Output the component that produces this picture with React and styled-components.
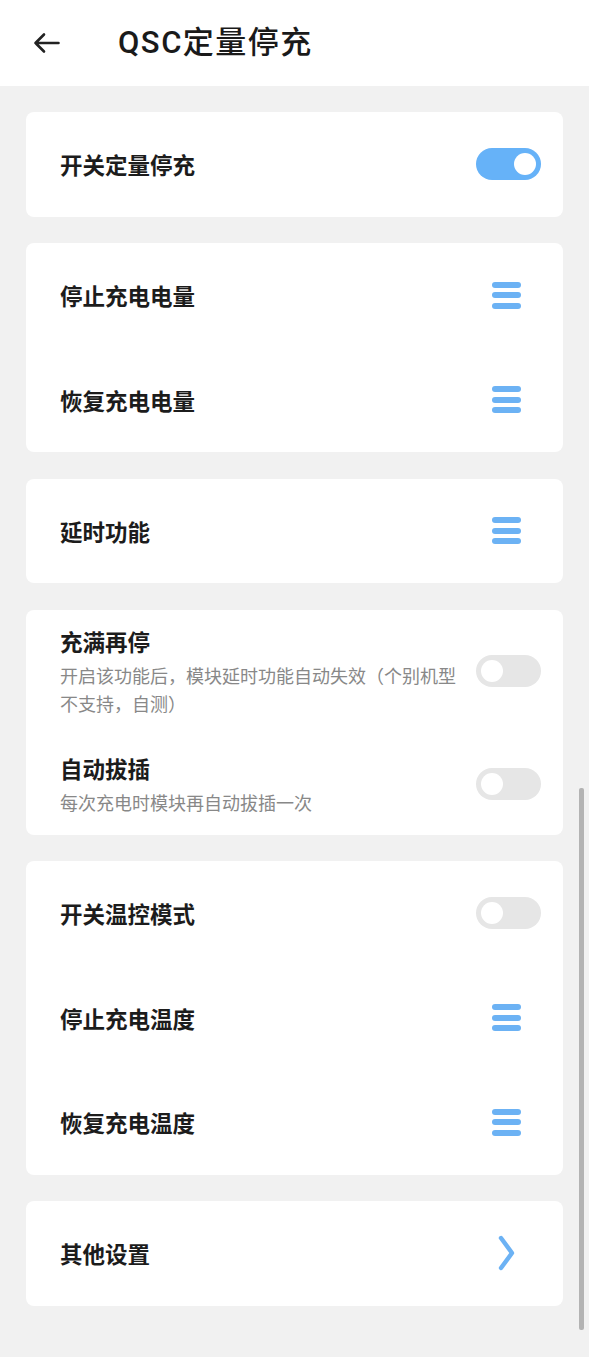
import React from "react";
import styled, { createGlobalStyle } from "styled-components";

const Global = createGlobalStyle`
  html, body { margin: 0; padding: 0; background: #f1f1f1; }
  body { font-family: Roboto, "Noto Sans CJK SC", sans-serif; color: #1c1c1c; }
  * { box-sizing: border-box; }
`;

const Page = styled.div`
  min-height: 1357px;
  background: #f1f1f1;
  display: flex;
  flex-direction: column;
`;

const Header = styled.header`
  height: 86px;
  background: #ffffff;
  display: flex;
  align-items: center;
  padding-left: 32px;
`;

const BackButton = styled.button`
  border: none;
  background: none;
  padding: 0;
  width: 28px;
  height: 24px;
  display: flex;
  align-items: center;
  justify-content: center;
  margin-right: 58px;
  color: #222;
`;

const Title = styled.h1`
  margin: 0;
  font-family: Roboto, "Noto Sans CJK SC", sans-serif;
  font-size: 31px;
  font-weight: 500;
  letter-spacing: 1.5px;
  line-height: 40px;
  color: #1a1a1a;
`;

const Content = styled.main`
  display: flex;
  flex-direction: column;
  gap: 26.5px;
  padding: 26px 26px 50px;
`;

const Card = styled.section`
  background: #ffffff;
  border-radius: 8px;
  display: flex;
  flex-direction: column;
  gap: ${(p) => p.$gap || 0}px;
  padding: ${(p) => p.$pad || "0"};
`;

const Row = styled.div`
  min-height: ${(p) => (p.$auto ? "0" : "104.5px")};
  display: flex;
  align-items: center;
  gap: 16px;
  padding: 0 22px 0 34px;
`;

const TextCol = styled.div`
  flex: 1;
  display: flex;
  flex-direction: column;
  gap: 5px;
`;

const Label = styled.div`
  font-family: "Noto Sans CJK SC", sans-serif;
  font-size: 22.5px;
  font-weight: 700;
  line-height: 30px;
  color: #1c1c1c;
`;

const Desc = styled.div`
  font-family: "Noto Sans CJK SC", sans-serif;
  font-size: 18px;
  line-height: 28px;
  color: #888888;
  max-width: 400px;
`;

const Trailing = styled.div`
  width: 65px;
  flex: none;
  display: flex;
  justify-content: center;
  align-items: center;
`;

const Track = styled.div`
  width: 65px;
  height: 32px;
  border-radius: 16px;
  background: ${(p) => (p.$on ? "#66b2f8" : "#e6e6e6")};
  display: flex;
  align-items: center;
  justify-content: ${(p) => (p.$on ? "flex-end" : "flex-start")};
  padding: 0 5px;
`;

const Knob = styled.div`
  width: 22px;
  height: 22px;
  border-radius: 50%;
  background: #ffffff;
`;

const Menu = styled.div`
  width: 29px;
  margin-right: 4px;
  display: flex;
  flex-direction: column;
  gap: 4.3px;
`;

const Bar = styled.div`
  height: 6px;
  border-radius: 3px;
  background: #6cb2f4;
`;

const Scrollbar = styled.div`
  position: fixed;
  left: 579px;
  top: 788px;
  width: 5px;
  height: 542px;
  background: #b3b3b3;
  border-radius: 2px;
`;

const Toggle = ({ on }) => (
  <Track $on={on}>
    <Knob />
  </Track>
);

const MenuIcon = () => (
  <Menu>
    <Bar />
    <Bar />
    <Bar />
  </Menu>
);

const Chevron = () => (
  <svg width="18" height="36" viewBox="0 0 18 36" style={{ marginRight: "4px" }}>
    <path
      d="M3 3 L14 18 L3 33"
      fill="none"
      stroke="#6cb2f4"
      strokeWidth="4.4"
      strokeLinecap="round"
      strokeLinejoin="round"
    />
  </svg>
);

const ArrowBack = () => (
  <svg width="27" height="22" viewBox="0 0 27 22">
    <path
      d="M25.5 11 H2.5 M11 2.5 L2.5 11 L11 19.5"
      fill="none"
      stroke="#222"
      strokeWidth="2.6"
      strokeLinecap="round"
      strokeLinejoin="round"
    />
  </svg>
);

const SimpleRow = ({ label, children }) => (
  <Row>
    <TextCol>
      <Label>{label}</Label>
    </TextCol>
    <Trailing>{children}</Trailing>
  </Row>
);

export default function App() {
  return (
    <>
      <Global />
      <Page>
        <Header>
          <BackButton aria-label="back">
            <ArrowBack />
          </BackButton>
          <Title>QSC定量停充</Title>
        </Header>
        <Content>
          <Card>
            <SimpleRow label="开关定量停充">
              <Toggle on />
            </SimpleRow>
          </Card>
          <Card>
            <SimpleRow label="停止充电电量">
              <MenuIcon />
            </SimpleRow>
            <SimpleRow label="恢复充电电量">
              <MenuIcon />
            </SimpleRow>
          </Card>
          <Card>
            <SimpleRow label="延时功能">
              <MenuIcon />
            </SimpleRow>
          </Card>
          <Card $gap={36} $pad="16px 0 19px">
            <Row $auto>
              <TextCol>
                <Label>充满再停</Label>
                <Desc>开启该功能后，模块延时功能自动失效（个别机型不支持，自测）</Desc>
              </TextCol>
              <Trailing>
                <Toggle />
              </Trailing>
            </Row>
            <Row $auto>
              <TextCol>
                <Label>自动拔插</Label>
                <Desc>每次充电时模块再自动拔插一次</Desc>
              </TextCol>
              <Trailing>
                <Toggle />
              </Trailing>
            </Row>
          </Card>
          <Card>
            <SimpleRow label="开关温控模式">
              <Toggle />
            </SimpleRow>
            <SimpleRow label="停止充电温度">
              <MenuIcon />
            </SimpleRow>
            <SimpleRow label="恢复充电温度">
              <MenuIcon />
            </SimpleRow>
          </Card>
          <Card>
            <SimpleRow label="其他设置">
              <Chevron />
            </SimpleRow>
          </Card>
        </Content>
        <Scrollbar />
      </Page>
    </>
  );
}
